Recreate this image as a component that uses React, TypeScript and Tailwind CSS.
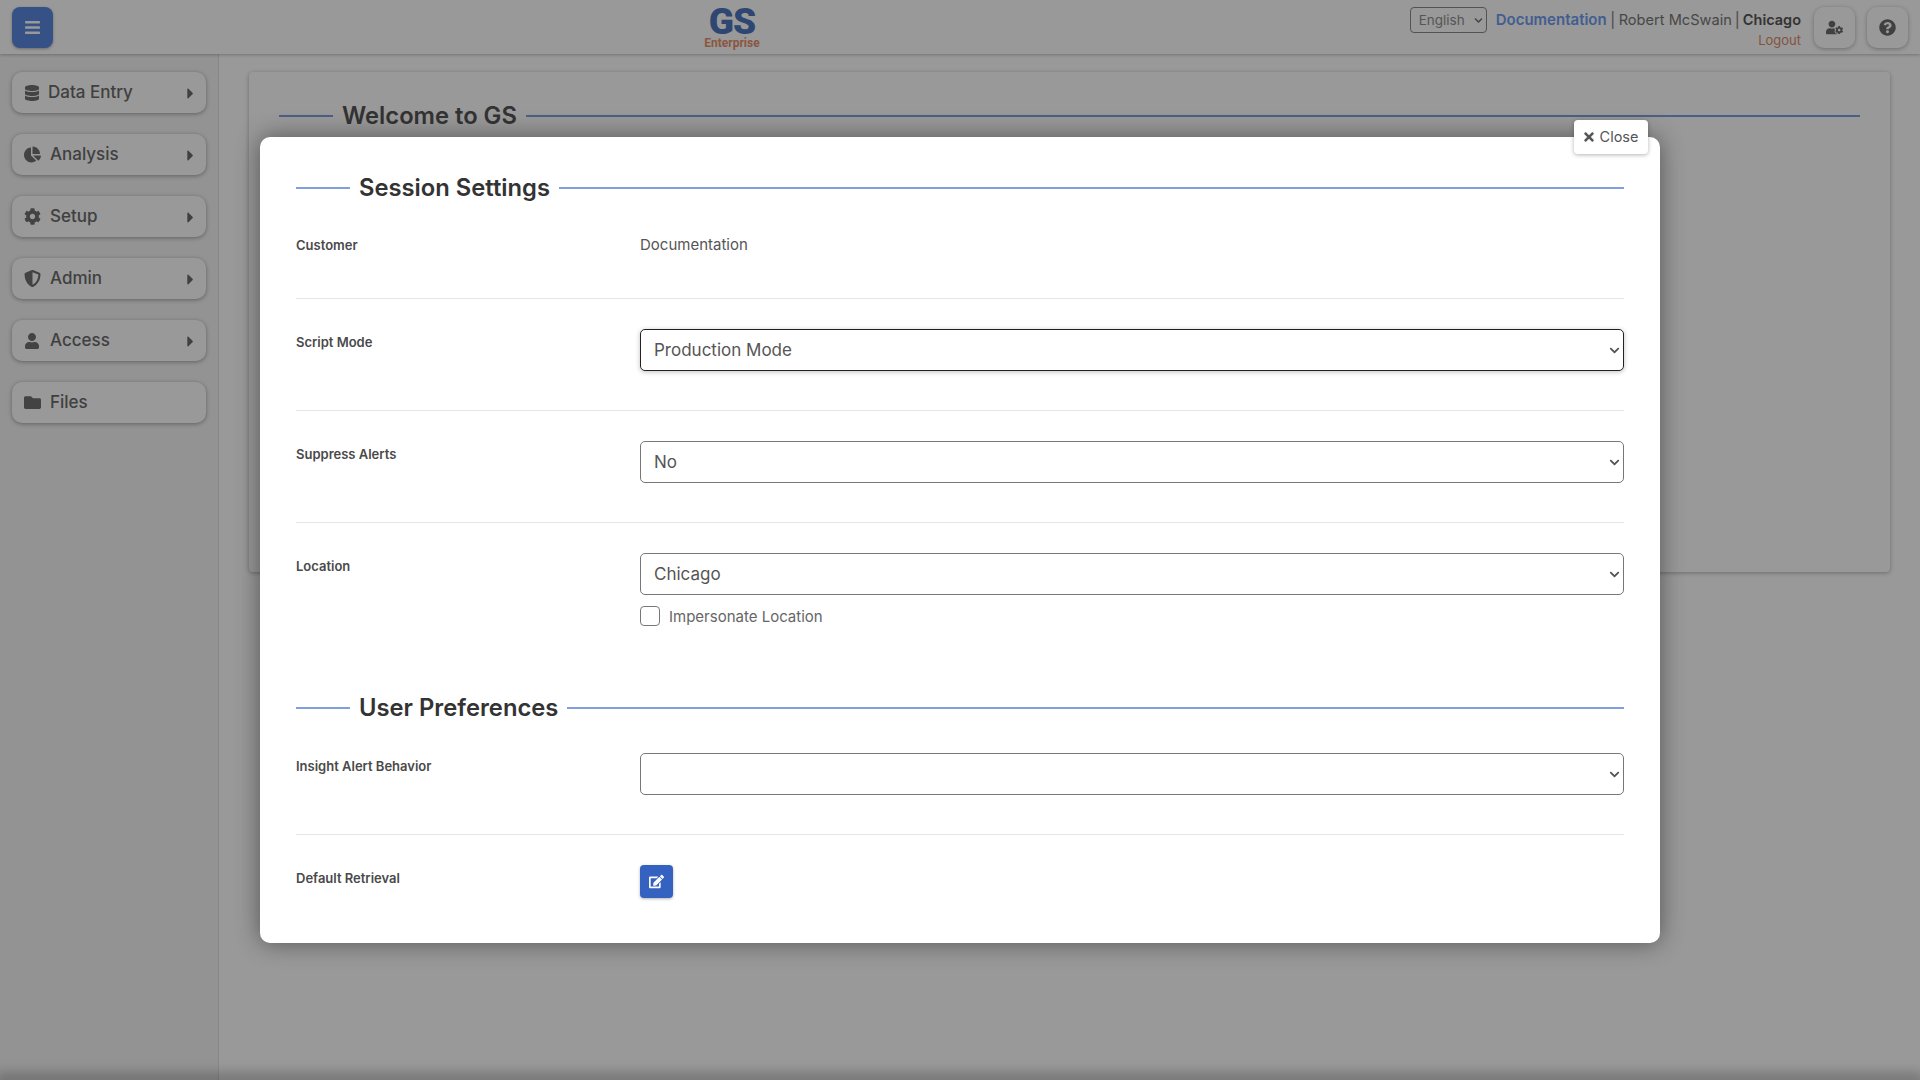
import type { ReactNode } from "react";
import {
  FaBars,
  FaCaretRight,
  FaChartPie,
  FaChevronDown,
  FaCog,
  FaDatabase,
  FaEdit,
  FaFolder,
  FaQuestionCircle,
  FaShieldAlt,
  FaTimes,
  FaUser,
  FaUserCog,
} from "react-icons/fa";

const navItems = [
  { label: "Data Entry", icon: <FaDatabase size={16} />, caret: true, shift: "-ml-[2px]" },
  { label: "Analysis", icon: <FaChartPie size={17} />, caret: true, shift: "" },
  { label: "Setup", icon: <FaCog size={17} />, caret: true, shift: "" },
  { label: "Admin", icon: <FaShieldAlt size={17} />, caret: true, shift: "" },
  { label: "Access", icon: <FaUser size={16} />, caret: true, shift: "" },
  { label: "Files", icon: <FaFolder size={17} />, caret: false, shift: "" },
];

function NavButton({ label, icon, caret, shift }: { label: string; icon: ReactNode; caret: boolean; shift: string }) {
  return (
    <button className="flex h-[41px] w-[194px] items-center gap-[9px] rounded-[10px] bg-white pl-3 pr-[7px] text-left text-[17px] font-medium text-[#6b6b6b] shadow-[0_1px_4px_rgba(0,0,0,0.35)]">
      <span className="flex w-[17px] shrink-0 justify-start text-[#707070]">{icon}</span>
      <span className={`flex-1 ${shift}`}>{label}</span>
      {caret && <FaCaretRight size={17} className="mt-[2px] text-[#6b6b6b]" />}
    </button>
  );
}

function SectionHeading({ title, color }: { title: string; color: string }) {
  return (
    <div className="flex h-9 items-center">
      <div className="h-[2px] w-[54px] bg-[#7f9fdf]" />
      <h2 className={`mx-[9px] mb-[1px] text-[23.75px] font-semibold ${color}`}>{title}</h2>
      <div className="h-[2px] flex-1 bg-[#7f9fdf]" />
    </div>
  );
}

function Field({ label, divider, children }: { label: string; divider?: boolean; children: ReactNode }) {
  return (
    <div className={`flex ${divider ? "border-b border-[#e4e4e4] pb-[39px]" : ""}`}>
      <div className="w-[344px] shrink-0 pt-[3px] text-[13px] leading-5 font-semibold text-[#4a4a4a]">{label}</div>
      <div className="flex-1">{children}</div>
    </div>
  );
}

function SelectBox({ value, focused }: { value: string; focused?: boolean }) {
  return (
    <div className="relative">
      <select
        defaultValue={value}
        className={`block h-[42px] w-full appearance-none rounded-[5px] border bg-white pl-[13px] pt-[2px] text-[17px] text-[#555] ${
          focused ? "border-[#222] shadow-[0_1px_5px_rgba(0,0,0,0.25)]" : "border-[#777]"
        }`}
      >
        <option value={value}>{value}</option>
      </select>
      <FaChevronDown size={11} className="pointer-events-none absolute right-[4px] top-[16px] text-[#555]" />
    </div>
  );
}

export default function App() {
  return (
    <div className="relative flex h-screen flex-col overflow-hidden bg-white font-['Inter','Liberation_Sans',sans-serif] text-[#555]">
      <header className="relative z-10 flex h-[54px] shrink-0 items-center bg-white pl-3 pr-3 shadow-[0_1px_3px_rgba(0,0,0,0.25)]">
        <button className="flex h-[41px] w-[41px] shrink-0 items-center justify-center rounded-[8px] bg-[#5a88e0] text-white shadow-[0_1px_3px_rgba(0,0,0,0.3)]">
          <FaBars size={17} />
        </button>
        <div className="ml-[651px] flex w-[56px] shrink-0 flex-col items-center">
          <span className="mt-[2px] text-[37px] leading-[28px] font-black tracking-[-1px] text-[#4d75be] [font-family:'Roboto',sans-serif]">GS</span>
          <span className="mt-[1px] text-[12px] leading-[12px] font-bold whitespace-nowrap text-[#e8906c] [font-family:'Roboto',sans-serif]">Enterprise</span>
        </div>
        <div className="ml-auto flex items-start self-stretch">
          <div className="relative mt-[7px]">
            <select defaultValue="English" className="block h-[26px] w-[77px] appearance-none rounded-[4px] border border-[#8a8a8a] bg-white pl-[8px] text-[13.5px] text-[#909090]">
              <option>English</option>
            </select>
            <FaChevronDown size={9} className="pointer-events-none absolute right-[4px] top-[9px] text-[#707070]" />
          </div>
          <div className="ml-[9px] flex flex-col items-end pt-[9px] text-[15px] leading-[22px]">
            <div className="whitespace-nowrap">
              <span className="font-semibold text-[#6f9cf0]">Documentation</span>
              <span className="mx-[3.5px] text-[#777]">|</span>
              <span className="text-[14.6px] text-[#777]">Robert McSwain</span>
              <span className="mx-[3px] text-[#777]">|</span>
              <span className="text-[14.5px] font-semibold text-[#555]">Chicago</span>
            </div>
            <span className="text-[13px] leading-[18px] text-[#e08a66]">Logout</span>
          </div>
          <button className="ml-[13px] mt-[7px] flex h-[41px] w-[41px] shrink-0 items-center justify-center rounded-[10px] bg-white text-[#6b6b6b] shadow-[0_1px_4px_rgba(0,0,0,0.3)]">
            <FaUserCog size={17} />
          </button>
          <button className="ml-[12px] mt-[7px] flex h-[41px] w-[41px] shrink-0 items-center justify-center rounded-[10px] bg-white text-[#6b6b6b] shadow-[0_1px_4px_rgba(0,0,0,0.3)]">
            <FaQuestionCircle size={17} />
          </button>
        </div>
      </header>

      <div className="flex flex-1">
        <aside className="flex w-[219px] shrink-0 flex-col gap-[21px] border-r border-[#e2e2e2] bg-[#f5f5f5] pl-3 pt-[18px]">
          {navItems.map((item) => (
            <NavButton key={item.label} {...item} />
          ))}
        </aside>
        <main className="flex-1 pl-[30px] pr-[30px] pt-[18px]">
          <div className="h-[500px] rounded-[4px] bg-white px-[30px] pt-[26px] shadow-[0_1px_4px_rgba(0,0,0,0.3)]">
            <SectionHeading title="Welcome to GS" color="text-[#555]" />
          </div>
        </main>
      </div>
      <div className="h-0 shrink-0 shadow-[0_0_14px_5px_rgba(0,0,0,0.35)]" />

      {/* dimmed backdrop */}
      <div className="absolute inset-0 z-20 bg-black/40" />

      {/* session settings modal */}
      <div className="absolute left-[260px] top-[137px] z-30 w-[1400px] rounded-[10px] bg-white px-9 pb-[45px] pt-[33px] shadow-[0_0_24px_rgba(0,0,0,0.45)]">
        <button className="absolute right-[12px] top-[-17px] flex h-[34px] w-[74px] items-center justify-center gap-[4px] rounded-[4px] bg-white pr-[2px] text-[14.5px] text-[#555] shadow-[0_1px_4px_rgba(0,0,0,0.3)]">
          <FaTimes size={14} />
          Close
        </button>

        <SectionHeading title="Session Settings" color="text-[#333]" />
        <div className="pt-[26px]">
          <div className="flex border-b border-[#e4e4e4] pb-[42px]">
            <div className="w-[344px] shrink-0 pt-[3px] text-[13px] leading-5 font-semibold text-[#4a4a4a]">Customer</div>
            <div className="pt-[1px] text-[15px] leading-[23px] text-[#555]">Documentation</div>
          </div>
        </div>
        <div className="pt-[30px]">
          <Field label="Script Mode" divider>
            <SelectBox value="Production Mode" focused />
          </Field>
        </div>
        <div className="pt-[30px]">
          <Field label="Suppress Alerts" divider>
            <SelectBox value="No" />
          </Field>
        </div>
        <div className="pt-[30px]">
          <Field label="Location">
            <SelectBox value="Chicago" />
            <label className="mt-[11px] flex h-5 items-center gap-[9px] text-[15px] text-[#666]">
              <input type="checkbox" className="h-5 w-5 appearance-none rounded-[4px] border border-[#777] bg-white" />
              <span className="mt-[2px]">Impersonate Location</span>
            </label>
          </Field>
        </div>

        <div className="mt-[64px]">
          <SectionHeading title="User Preferences" color="text-[#333]" />
        </div>
        <div className="pt-[27px]">
          <Field label="Insight Alert Behavior" divider>
            <SelectBox value="" />
          </Field>
        </div>
        <div className="pt-[30px]">
          <Field label="Default Retrieval">
            <button className="flex h-[33px] w-[33px] items-center justify-center rounded-[4px] bg-[#3561c0] text-white shadow-[0_1px_3px_rgba(0,0,0,0.3)]">
              <FaEdit size={15} />
            </button>
          </Field>
        </div>
      </div>
    </div>
  );
}
